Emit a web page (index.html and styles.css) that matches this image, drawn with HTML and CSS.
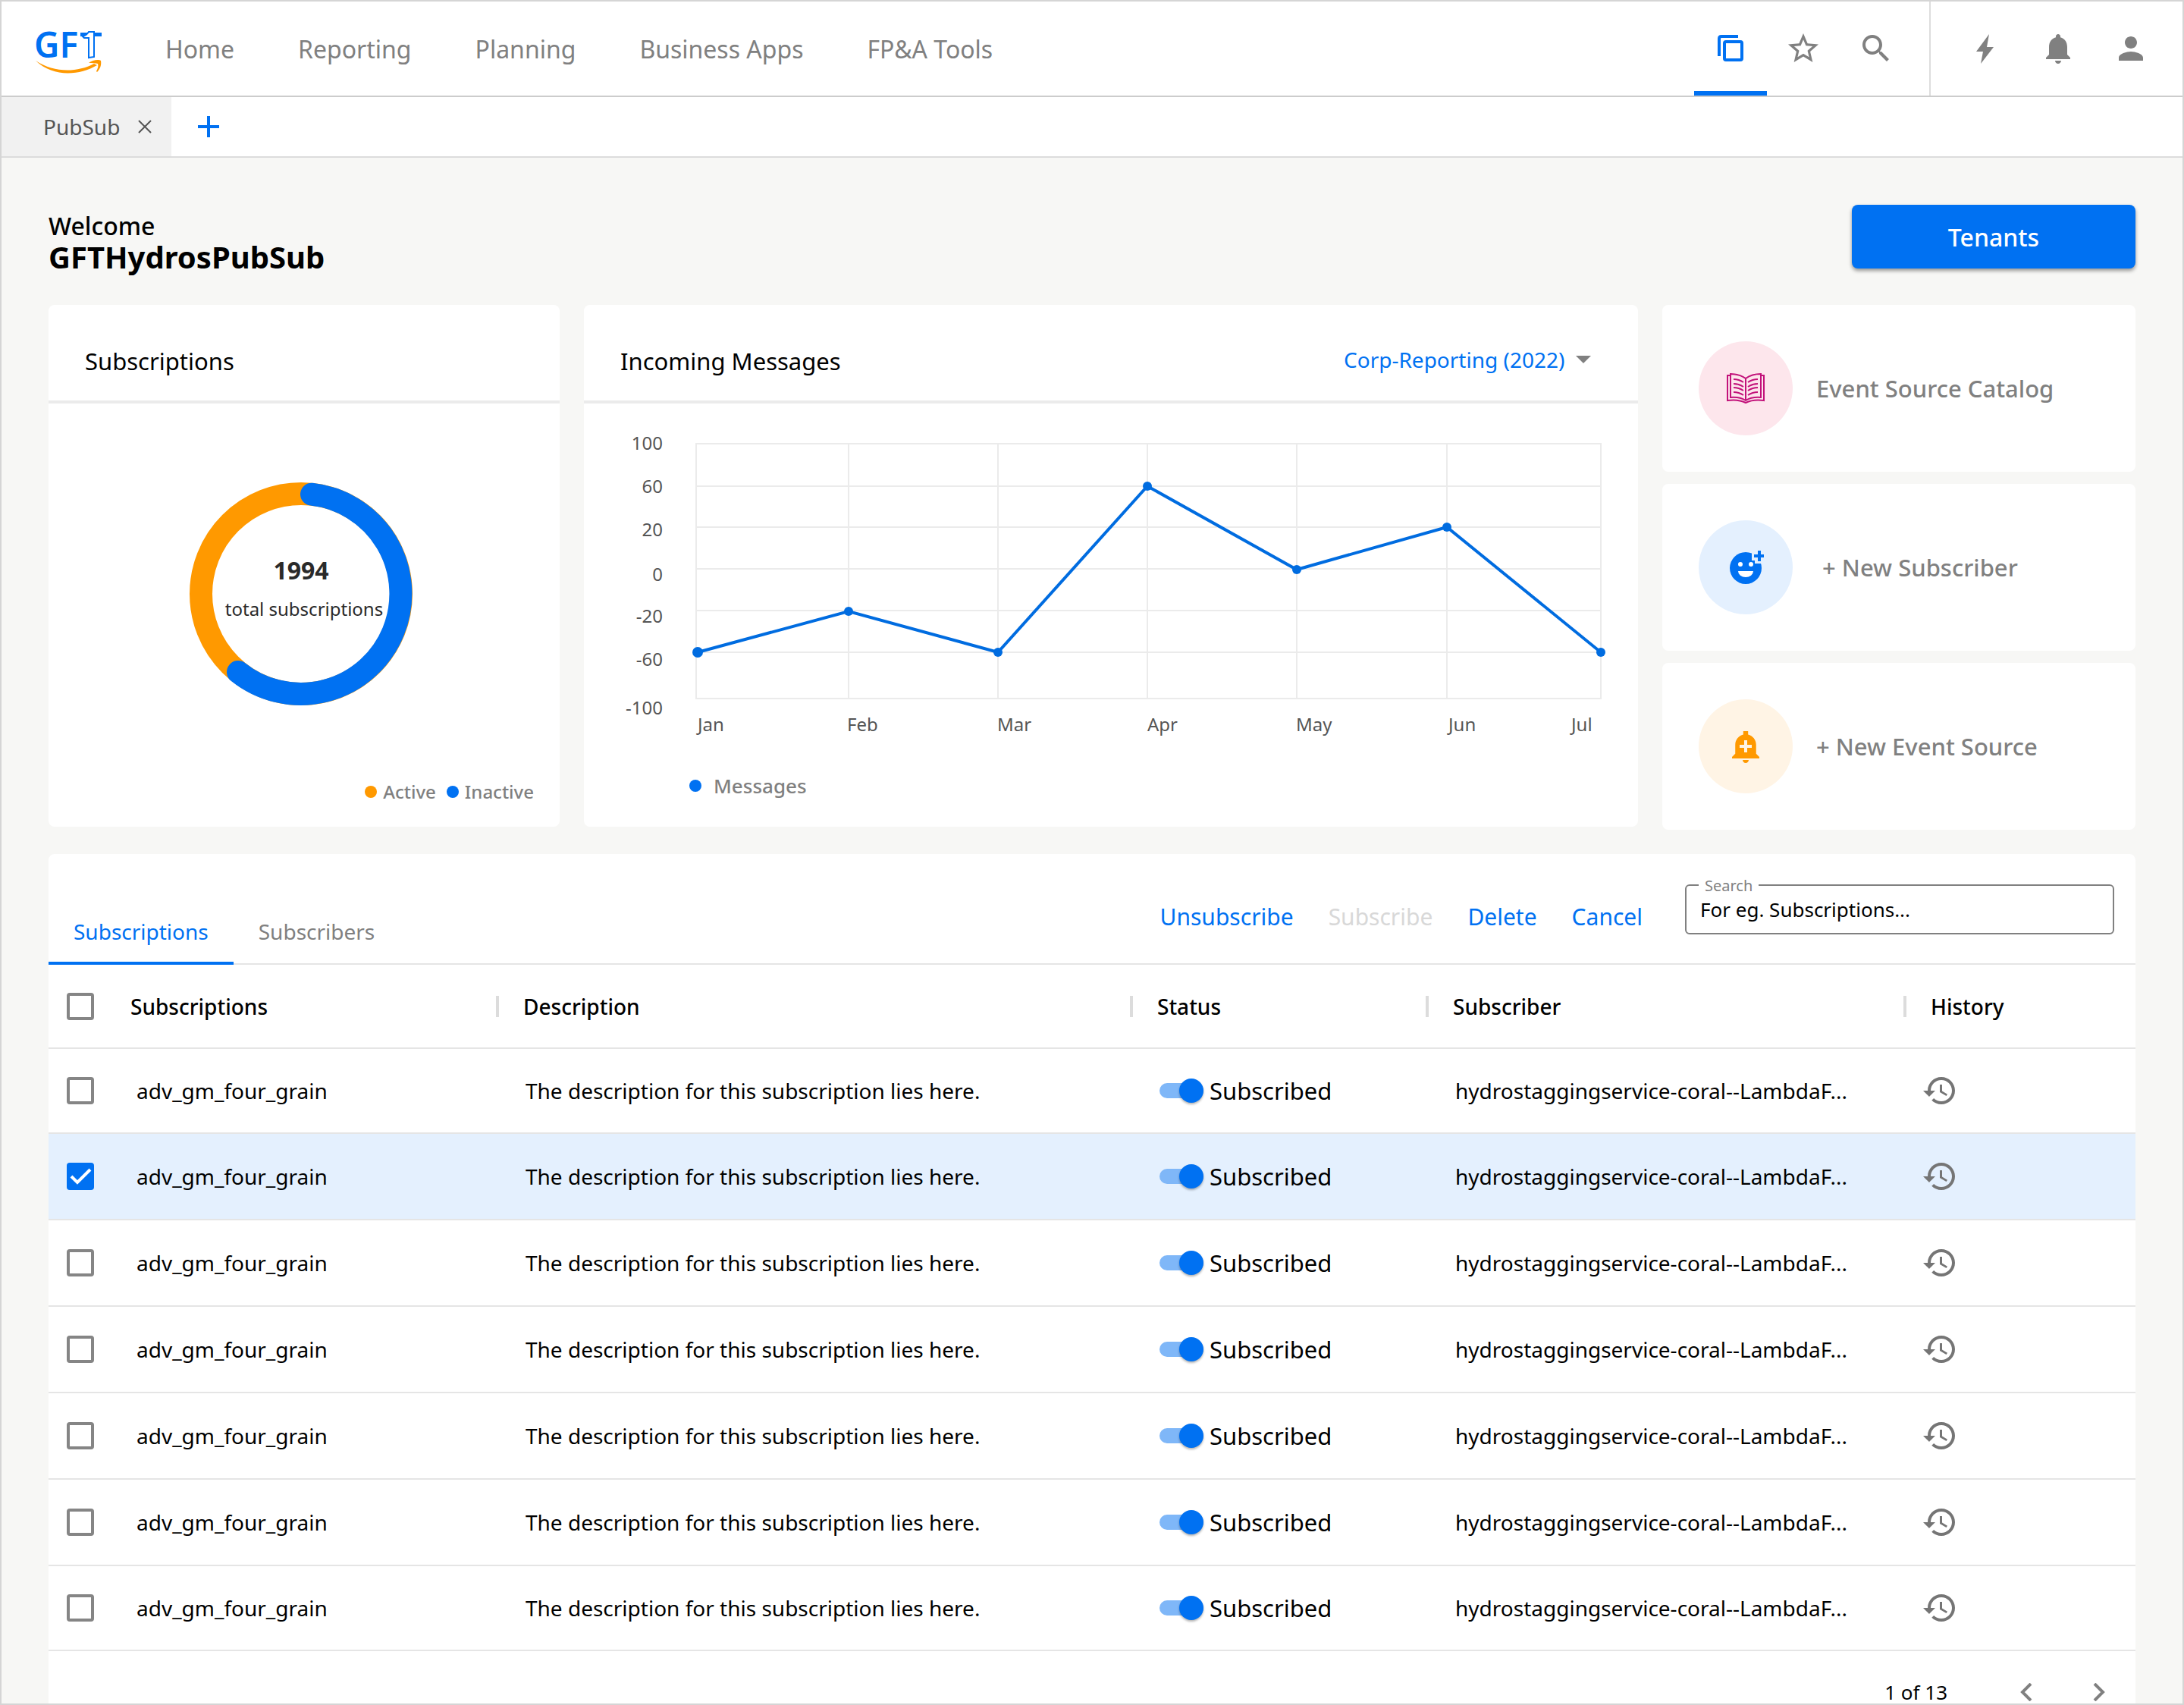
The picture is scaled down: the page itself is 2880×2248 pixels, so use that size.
FILE: index.html
```html
<!DOCTYPE html>
<html lang="en">
<head>
    <meta charset="UTF-8">
    <meta name="viewport" content="width=device-width, initial-scale=1.0">
    <title>PubSub - GFTHydrosPubSub</title>
    <link rel="stylesheet" href="styles.css">
</head>
<body>
    <!-- Shared icons -->
    <svg class="icon-defs" aria-hidden="true">
        <symbol id="icon-history" viewBox="0 0 24 24">
            <path d="M13 3c-4.97 0-9 4.03-9 9H1l3.89 3.89.07.14L9 12H6c0-3.87 3.13-7 7-7s7 3.13 7 7-3.13 7-7 7c-1.93 0-3.68-.79-4.94-2.06l-1.42 1.42C8.27 19.99 10.51 21 13 21c4.97 0 9-4.03 9-9s-4.03-9-9-9zm-1 5v5l4.28 2.54.72-1.21-3.5-2.08V8H12z"/>
        </symbol>
    </svg>

    <div class="page">
        <header class="top-bar">
            <a class="logo" href="#" aria-label="GFT home">
                <svg width="90" height="74" viewBox="0 0 90 74">
                    <text class="logo-text" x="-1" y="50">GF</text>
                    <path fill="#0071f2" d="M60 17h9v5h-9zM78 17h10v5H78z"/>
                    <path fill="#fff" stroke="#0071f2" stroke-width="2" d="M63 22c4-1 6-3 8-6h7v33l-7 1V24h-6z"/>
                    <path fill="#ff9900" d="M1 54c24 16 54 16 77 4l4 2C58 74 24 76 1 54z"/>
                    <path fill="#ff9900" d="M71 57c5-4 13-5 16-3 1 6-1 11-5 15l-1-1c2-4 3-7 2-10-3-1-8-1-12-1z"/>
                </svg>
            </a>
            <nav class="main-nav">
                <a href="#">Home</a>
                <a href="#">Reporting</a>
                <a href="#">Planning</a>
                <a href="#">Business Apps</a>
                <a href="#">FP&amp;A Tools</a>
            </nav>
            <div class="tools">
                <button class="tool active" aria-label="Tabs">
                    <svg viewBox="0 0 48 48" fill="none" stroke="currentColor" stroke-width="4">
                        <path d="M34 8H12q-3 0-3 3v23"/>
                        <rect x="16" y="15" width="23" height="24" rx="2"/>
                    </svg>
                </button>
                <button class="tool" aria-label="Favorites">
                    <svg viewBox="0 0 24 24"><path d="M22 9.24l-7.19-.62L12 2 9.19 8.63 2 9.24l5.46 4.73L5.82 21 12 17.27 18.18 21l-1.63-7.03L22 9.24zM12 15.4l-3.76 2.27 1-4.28-3.32-2.88 4.38-.38L12 6.1l1.71 4.04 4.38.38-3.32 2.88 1 4.28L12 15.4z"/></svg>
                </button>
                <button class="tool" aria-label="Search">
                    <svg viewBox="0 0 24 24"><path d="M15.5 14h-.79l-.28-.27C15.41 12.59 16 11.11 16 9.5 16 5.91 13.09 3 9.5 3S3 5.91 3 9.5 5.91 16 9.5 16c1.61 0 3.09-.59 4.23-1.57l.27.28v.79l5 4.99L20.49 19l-4.99-5zm-6 0C7.01 14 5 11.99 5 9.5S7.01 5 9.5 5 14 7.01 14 9.5 11.99 14 9.5 14z"/></svg>
                </button>
            </div>
            <div class="tools user-tools">
                <button class="tool" aria-label="Quick actions">
                    <svg viewBox="0 0 48 48"><path d="M29 5l-3 17h9L18 44l3-16h-9z"/></svg>
                </button>
                <button class="tool" aria-label="Notifications">
                    <svg viewBox="0 0 24 24"><path d="M12 22c1.1 0 2-.9 2-2h-4c0 1.1.89 2 2 2zm6-6v-5c0-3.07-1.64-5.64-4.5-6.32V4c0-.83-.67-1.5-1.5-1.5s-1.5.67-1.5 1.5v.68C7.63 5.36 6 7.92 6 11v5l-2 2v1h16v-1l-2-2z"/></svg>
                </button>
                <button class="tool" aria-label="Account">
                    <svg viewBox="0 0 24 24"><path d="M12 12c2.21 0 4-1.79 4-4s-1.79-4-4-4-4 1.79-4 4 1.79 4 4 4zm0 2c-2.67 0-8 1.34-8 4v2h16v-2c0-2.66-5.33-4-8-4z"/></svg>
                </button>
            </div>
        </header>

        <div class="tab-bar">
            <div class="page-tab">
                <a href="#">PubSub</a>
                <button aria-label="Close tab">
                    <svg width="18" height="18" viewBox="0 0 18 18" stroke="currentColor" stroke-width="2"><path d="M1 1l16 16M17 1L1 17"/></svg>
                </button>
            </div>
            <button class="add-tab" aria-label="Add tab">
                <svg width="30" height="30" viewBox="0 0 30 30" stroke="currentColor" stroke-width="4"><path d="M15 1v28M1 15h28"/></svg>
            </button>
        </div>

        <main>
            <div class="welcome">
                <div class="welcome-text">
                    <p>Welcome</p>
                    <h1>GFTHydrosPubSub</h1>
                </div>
                <button class="tenants-btn">Tenants</button>
            </div>

            <div class="dashboard">
                <!-- Subscriptions donut -->
                <section class="card">
                    <div class="card-head">
                        <h2>Subscriptions</h2>
                    </div>
                    <div class="donut">
                        <svg width="294" height="294" viewBox="0 0 294 294">
                            <circle cx="147" cy="147" r="132" fill="none" stroke="#ff9900" stroke-width="30"/>
                            <path d="M161 15.7A132 132 0 1 1 64 250" fill="none" stroke="#0071f2" stroke-width="30" stroke-linecap="round"/>
                            <text class="donut-total" x="147" y="128">1994</text>
                            <text class="donut-label" x="151" y="176">total subscriptions</text>
                        </svg>
                    </div>
                    <ul class="donut-legend">
                        <li><span class="dot orange"></span>Active</li>
                        <li><span class="dot"></span>Inactive</li>
                    </ul>
                </section>

                <!-- Incoming messages chart -->
                <section class="card">
                    <div class="card-head">
                        <h2>Incoming Messages</h2>
                        <div class="report-select">
                            <select aria-label="Report">
                                <option>Corp-Reporting (2022)</option>
                            </select>
                            <svg width="20" height="10" viewBox="0 0 20 10"><path d="M0 0h20L10 10z"/></svg>
                        </div>
                    </div>
                    <svg class="line-chart" viewBox="0 0 1390 450">
                        <g class="grid">
                            <path d="M148 53H1341M148 109H1342M148 163H1341M148 218H1341M148 273H1342M148 328H1341M148 389H1341"/>
                            <path d="M148 52V390M349 52V390M546 52V390M743 52V390M940 52V390M1138 52V390M1341 52V390"/>
                        </g>
                        <g class="y-axis">
                            <text x="104" y="61">100</text>
                            <text x="104" y="118">60</text>
                            <text x="104" y="175">20</text>
                            <text x="104" y="234">0</text>
                            <text x="104" y="289">-20</text>
                            <text x="104" y="346">-60</text>
                            <text x="104" y="410">-100</text>
                        </g>
                        <g class="x-axis">
                            <text x="150" y="432">Jan</text>
                            <text x="347" y="432">Feb</text>
                            <text x="545" y="432">Mar</text>
                            <text x="743" y="432">Apr</text>
                            <text x="939" y="432">May</text>
                            <text x="1140" y="432">Jun</text>
                            <text x="1302" y="432">Jul</text>
                        </g>
                        <polyline class="series" points="150,328 349,274 546,328 743,109 940,219 1138,163 1341,328"/>
                        <g class="points">
                            <circle cx="150" cy="328" r="7"/>
                            <circle cx="349" cy="274" r="6"/>
                            <circle cx="546" cy="328" r="6"/>
                            <circle cx="743" cy="109" r="6"/>
                            <circle cx="940" cy="219" r="6"/>
                            <circle cx="1138" cy="163" r="6"/>
                            <circle cx="1341" cy="328" r="6"/>
                        </g>
                    </svg>
                    <div class="chart-legend"><span class="dot"></span>Messages</div>
                </section>

                <!-- Shortcuts -->
                <div class="shortcuts">
                    <a class="card shortcut" href="#">
                        <span class="shortcut-icon pink">
                            <svg width="50" height="40" viewBox="0 0 50 40" fill="none" stroke="#c2127a" stroke-width="2">
                                <path d="M5 3H1v33q14-2 24 3 10-5 24-3V3h-4"/>
                                <path d="M25 7Q17 1 5 1v31q12-1 20 4 8-5 20-4V1Q33 1 25 7v29"/>
                                <path d="M9 8q7 0 13 4M9 14q7 0 13 4M9 19q7 0 13 4M9 25q7 0 13 4M41 8q-7 0-13 4M41 14q-7 0-13 4M41 19q-7 0-13 4M41 25q-7 0-13 4"/>
                            </svg>
                        </span>
                        Event Source Catalog
                    </a>
                    <a class="card shortcut" href="#">
                        <span class="shortcut-icon blue">
                            <svg width="48" height="48" viewBox="0 0 48 48">
                                <circle cx="24" cy="25" r="21" fill="#0071f2"/>
                                <path d="M32 0h16v19H36v-4h-4z" fill="#e4f0fe"/>
                                <path d="M40 2h4v5h5v4h-5v5h-4v-5h-5V7h5z" fill="#0071f2"/>
                                <circle cx="17" cy="20" r="3" fill="#fff"/>
                                <circle cx="31" cy="20" r="3" fill="#fff"/>
                                <path d="M14 29h20a10 8 0 0 1-20 0z" fill="#fff"/>
                            </svg>
                        </span>
                        &nbsp;+ New Subscriber
                    </a>
                    <a class="card shortcut" href="#">
                        <span class="shortcut-icon cream">
                            <svg width="48" height="48" viewBox="0 0 24 24" fill="#ff9900"><path d="M10.01 21.01c0 1.1.89 1.99 1.99 1.99s1.99-.89 1.99-1.99h-3.98zm8.87-4.19V11c0-3.25-2.25-5.97-5.29-6.69V2h-3.18v2.31C7.37 5.03 5.12 7.75 5.12 11v5.82L3 18.94V20h18v-1.06l-2.12-2.12zM16 13.01h-3v3h-2v-3H8V11h3V8h2v3h3v2.01z"/></svg>
                        </span>
                        + New Event Source
                    </a>
                </div>
            </div>

            <section class="card table-card">
                <div class="toolbar">
                    <div class="table-tabs">
                        <button class="active">Subscriptions</button>
                        <button>Subscribers</button>
                    </div>
                    <div class="actions">
                        <button>Unsubscribe</button>
                        <button disabled>Subscribe</button>
                        <button>Delete</button>
                        <button>Cancel</button>
                    </div>
                    <div class="search">
                        <label for="search">Search</label>
                        <input type="text" id="search" placeholder="For eg. Subscriptions...">
                    </div>
                </div>

                <table>
                    <thead>
                        <tr>
                            <th class="col-check"><input type="checkbox" aria-label="Select all"></th>
                            <th class="col-name">Subscriptions</th>
                            <th class="col-desc"><span>Description</span></th>
                            <th class="col-status"><span>Status</span></th>
                            <th class="col-subscriber"><span>Subscriber</span></th>
                            <th class="col-history"><span>History</span></th>
                        </tr>
                    </thead>
                    <tbody>
                        <tr>
                            <td><input type="checkbox" aria-label="Select row 1"></td>
                            <td class="name">adv_gm_four_grain</td>
                            <td>The description for this subscription lies here.</td>
                            <td><label class="switch"><input type="checkbox" checked>Subscribed</label></td>
                            <td>hydrostaggingservice-coral--LambdaF...</td>
                            <td class="history"><button aria-label="History"><svg><use href="#icon-history"/></svg></button></td>
                        </tr>
                        <tr class="selected">
                            <td><input type="checkbox" aria-label="Select row 2" checked></td>
                            <td class="name">adv_gm_four_grain</td>
                            <td>The description for this subscription lies here.</td>
                            <td><label class="switch"><input type="checkbox" checked>Subscribed</label></td>
                            <td>hydrostaggingservice-coral--LambdaF...</td>
                            <td class="history"><button aria-label="History"><svg><use href="#icon-history"/></svg></button></td>
                        </tr>
                        <tr>
                            <td><input type="checkbox" aria-label="Select row 3"></td>
                            <td class="name">adv_gm_four_grain</td>
                            <td>The description for this subscription lies here.</td>
                            <td><label class="switch"><input type="checkbox" checked>Subscribed</label></td>
                            <td>hydrostaggingservice-coral--LambdaF...</td>
                            <td class="history"><button aria-label="History"><svg><use href="#icon-history"/></svg></button></td>
                        </tr>
                        <tr>
                            <td><input type="checkbox" aria-label="Select row 4"></td>
                            <td class="name">adv_gm_four_grain</td>
                            <td>The description for this subscription lies here.</td>
                            <td><label class="switch"><input type="checkbox" checked>Subscribed</label></td>
                            <td>hydrostaggingservice-coral--LambdaF...</td>
                            <td class="history"><button aria-label="History"><svg><use href="#icon-history"/></svg></button></td>
                        </tr>
                        <tr>
                            <td><input type="checkbox" aria-label="Select row 5"></td>
                            <td class="name">adv_gm_four_grain</td>
                            <td>The description for this subscription lies here.</td>
                            <td><label class="switch"><input type="checkbox" checked>Subscribed</label></td>
                            <td>hydrostaggingservice-coral--LambdaF...</td>
                            <td class="history"><button aria-label="History"><svg><use href="#icon-history"/></svg></button></td>
                        </tr>
                        <tr>
                            <td><input type="checkbox" aria-label="Select row 6"></td>
                            <td class="name">adv_gm_four_grain</td>
                            <td>The description for this subscription lies here.</td>
                            <td><label class="switch"><input type="checkbox" checked>Subscribed</label></td>
                            <td>hydrostaggingservice-coral--LambdaF...</td>
                            <td class="history"><button aria-label="History"><svg><use href="#icon-history"/></svg></button></td>
                        </tr>
                        <tr>
                            <td><input type="checkbox" aria-label="Select row 7"></td>
                            <td class="name">adv_gm_four_grain</td>
                            <td>The description for this subscription lies here.</td>
                            <td><label class="switch"><input type="checkbox" checked>Subscribed</label></td>
                            <td>hydrostaggingservice-coral--LambdaF...</td>
                            <td class="history"><button aria-label="History"><svg><use href="#icon-history"/></svg></button></td>
                        </tr>
                    </tbody>
                </table>

                <div class="pagination">
                    <span>1 of 13</span>
                    <button aria-label="Previous page"><svg width="16" height="24" viewBox="0 0 16 24"><path d="M14 1L3 12l11 11"/></svg></button>
                    <button aria-label="Next page"><svg width="16" height="24" viewBox="0 0 16 24"><path d="M2 1l11 11L2 23"/></svg></button>
                </div>
            </section>
        </main>
    </div>
</body>
</html>
```

FILE: styles.css
```css
/* General Reset */
* {
  margin: 0;
  padding: 0;
  box-sizing: border-box;
}

body {
  font-family: "Noto Sans", sans-serif;
  font-size: 28px;
  color: #000;
  background-color: #f7f7f5;
}

button, input, select {
  font-family: inherit;
  font-size: inherit;
  color: inherit;
  background: none;
  border: none;
}

button {
  cursor: pointer;
}

a {
  color: inherit;
  text-decoration: none;
}

ul {
  list-style: none;
}

svg {
  display: block;
}

.icon-defs {
  display: none;
}

.page {
  display: flex;
  flex-direction: column;
  min-height: 100vh;
  border: 2px solid #d5d5d5;
}

/* Top Bar */
.top-bar {
  display: flex;
  height: 126px;
  background-color: #fff;
  border-bottom: 2px solid #ccc;
}

.logo {
  padding: 24px 0 0 44px;
}

.logo svg {
  overflow: visible;
}

.logo-text {
  font-size: 46px;
  font-weight: 600;
  fill: #0071f2;
}

.main-nav {
  display: flex;
  align-items: center;
  gap: 84px;
  margin-left: 82px;
  font-size: 32px;
  color: #808080;
}

.tools {
  display: flex;
  margin-left: auto;
  padding-right: 22px;
}

.user-tools {
  margin-left: 0;
  padding: 0 20px 0 24px;
  border-left: 2px solid #ddd;
}

.tool {
  display: flex;
  align-items: center;
  justify-content: center;
  width: 96px;
  color: #808080;
}

.tool svg {
  width: 48px;
  height: 48px;
  fill: currentColor;
}

.tool.active {
  color: #0071f2;
  box-shadow: inset 0 -6px #0071f2;
}

.tool.active svg {
  fill: none;
}

/* Page Tabs */
.tab-bar {
  display: flex;
  height: 80px;
  background-color: #fff;
  border-bottom: 2px solid #dcdcdc;
}

.page-tab {
  display: flex;
  align-items: center;
  gap: 24px;
  padding: 0 26px 0 55px;
  background-color: #f1f1f1;
  color: #555;
}

.add-tab {
  padding: 0 34px;
  color: #0071f2;
}

/* Main */
main {
  display: flex;
  flex: 1;
  flex-direction: column;
  padding: 62px 62px 0;
}

.welcome {
  display: flex;
  justify-content: space-between;
  align-items: flex-start;
  height: 132px;
}

.welcome-text {
  padding-top: 8px;
}

.welcome p {
  font-size: 32px;
  font-weight: 500;
  line-height: 40px;
}

.welcome h1 {
  font-size: 40px;
  line-height: 42px;
}

.tenants-btn {
  width: 374px;
  height: 84px;
  font-size: 32px;
  font-weight: 500;
  color: #fff;
  background-color: #0071f2;
  border-radius: 8px;
  box-shadow: 0 3px 5px rgba(0, 0, 0, 0.4);
}

/* Dashboard Cards */
.dashboard {
  display: grid;
  grid-template-columns: 674fr 1390fr 624fr;
  align-items: start;
  gap: 32px;
}

.card {
  background-color: #fff;
  border-radius: 8px;
}

.card-head {
  display: flex;
  justify-content: space-between;
  align-items: center;
  height: 130px;
  padding: 22px 48px 0;
  border-bottom: 4px solid #ebebeb;
}

.card-head h2 {
  font-size: 31px;
  font-weight: 400;
}

.donut {
  display: flex;
  justify-content: center;
  padding: 104px 8px 98px 0;
}

.donut-total {
  font-size: 32px;
  font-weight: 700;
  text-anchor: middle;
  fill: #2a2a2a;
}

.donut-label {
  font-size: 24px;
  text-anchor: middle;
  fill: #2a2a2a;
}

.donut-legend {
  display: flex;
  justify-content: flex-end;
  gap: 14px;
  padding: 0 34px 30px 0;
  font-size: 24px;
  font-weight: 500;
  line-height: 32px;
  color: #808080;
}

.donut-legend li {
  display: flex;
  align-items: center;
  gap: 8px;
}

.dot {
  width: 16px;
  height: 16px;
  border-radius: 50%;
  background-color: #0071f2;
}

.dot.orange {
  background-color: #ff9900;
}

.report-select {
  display: flex;
  align-items: center;
  gap: 14px;
  margin: 0 14px 4px 0;
}

.report-select select {
  appearance: none;
  color: #0071f2;
  cursor: pointer;
}

.report-select svg {
  fill: #808080;
}

/* Line Chart */
.line-chart {
  width: 100%;
}

.line-chart text {
  font-size: 24px;
  fill: #555;
}

.grid path {
  stroke: #ebebeb;
  stroke-width: 2;
}

.y-axis {
  text-anchor: end;
}

.series {
  fill: none;
  stroke: #006ce0;
  stroke-width: 4;
}

.points {
  fill: #006ce0;
}

.chart-legend {
  display: flex;
  align-items: center;
  gap: 16px;
  padding: 34px 139px;
  font-size: 26px;
  font-weight: 500;
  line-height: 40px;
  color: #808080;
}

/* Shortcuts */
.shortcuts {
  display: flex;
  flex-direction: column;
  gap: 16px;
}

.shortcut {
  display: flex;
  align-items: center;
  gap: 31px;
  height: 220px;
  padding: 0 48px;
  font-size: 31px;
  font-weight: 500;
  color: #808080;
}

.shortcut-icon {
  display: flex;
  align-items: center;
  justify-content: center;
  width: 124px;
  height: 124px;
  border-radius: 50%;
}

.pink {
  background-color: #fde6ec;
}

.blue {
  background-color: #e4f0fe;
}

.cream {
  background-color: #fff4e5;
}

/* Table Card */
.table-card {
  flex: 1;
  margin-top: 32px;
  border-radius: 8px 8px 0 0;
}

.toolbar {
  display: flex;
  height: 146px;
  padding-right: 28px;
  border-bottom: 2px solid #e5e5e5;
}

.table-tabs {
  display: flex;
  align-items: flex-end;
}

.table-tabs button {
  height: 88px;
  padding: 0 33px;
  margin-bottom: -2px;
  color: #808080;
}

.table-tabs .active {
  color: #0071f2;
  box-shadow: inset 0 -4px #0071f2;
}

.actions {
  display: flex;
  gap: 46px;
  margin: 58px 56px 0 auto;
  height: 48px;
  font-size: 30px;
  color: #0071f2;
}

.actions button:disabled {
  color: #d8d8d8;
}

.search {
  position: relative;
  width: 566px;
  margin-top: 40px;
}

.search input {
  width: 100%;
  height: 66px;
  padding: 0 18px;
  font-size: 26px;
  border: 2px solid #808080;
  border-radius: 6px;
}

.search input::placeholder {
  color: #000;
}

.search label {
  position: absolute;
  top: -12px;
  left: 18px;
  padding: 0 8px;
  font-size: 20px;
  line-height: 28px;
  color: #808080;
  background-color: #fff;
}

/* Table */
table {
  width: 100%;
  table-layout: fixed;
  border-collapse: collapse;
}

tr {
  height: 114px;
  border-bottom: 2px solid #e5e5e5;
}

thead tr {
  height: 110px;
}

tbody tr:first-child, tbody tr:last-child {
  height: 112px;
}

th {
  font-weight: 500;
  text-align: left;
}

th span {
  display: block;
  padding-left: 32px;
  line-height: 28px;
  border-left: 4px solid #dcdcdc;
}

td {
  padding-left: 39px;
  white-space: nowrap;
}

td:first-child, th:first-child {
  padding-left: 24px;
}

.name {
  padding-left: 8px;
}

.history {
  padding-left: 24px;
}

.col-check {
  width: 108px;
}

.col-name {
  width: 482px;
}

.col-status {
  width: 390px;
}

.col-subscriber {
  width: 630px;
}

.col-history {
  width: 306px;
}

.selected {
  background-color: #e4f0fe;
}

input[type="checkbox"] {
  display: block;
  appearance: none;
  width: 36px;
  height: 36px;
  border: 4px solid #858585;
  border-radius: 4px;
}

.selected td:first-child input {
  background: #0071f2 url("data:image/svg+xml,%3Csvg xmlns='http://www.w3.org/2000/svg' viewBox='0 0 36 36'%3E%3Cpath d='M6 18l8 8L31 9' fill='none' stroke='%23fff' stroke-width='4'/%3E%3C/svg%3E") center / 36px no-repeat;
  border-color: transparent;
  background-origin: border-box;
  background-clip: border-box;
}

.switch {
  display: flex;
  align-items: center;
  gap: 8px;
  font-size: 31px;
}

.switch input[type="checkbox"] {
  display: flex;
  align-items: center;
  justify-content: flex-end;
  width: 58px;
  height: 20px;
  border: none;
  border-radius: 10px;
  background-color: #7fb7f8;
}

.switch input::before {
  content: "";
  width: 32px;
  height: 32px;
  border-radius: 50%;
  background-color: #0071f2;
  box-shadow: 0 2px 3px rgba(0, 0, 0, 0.3);
}

.history button, .history svg {
  display: block;
  width: 48px;
  height: 48px;
  fill: #757575;
}

/* Pagination */
.pagination {
  display: flex;
  justify-content: flex-end;
  gap: 80px;
  padding: 40px 40px 0 0;
  font-size: 26px;
  line-height: 28px;
}

.pagination span {
  margin-right: 16px;
}

.pagination path {
  fill: none;
  stroke: #808080;
  stroke-width: 4;
}
```
